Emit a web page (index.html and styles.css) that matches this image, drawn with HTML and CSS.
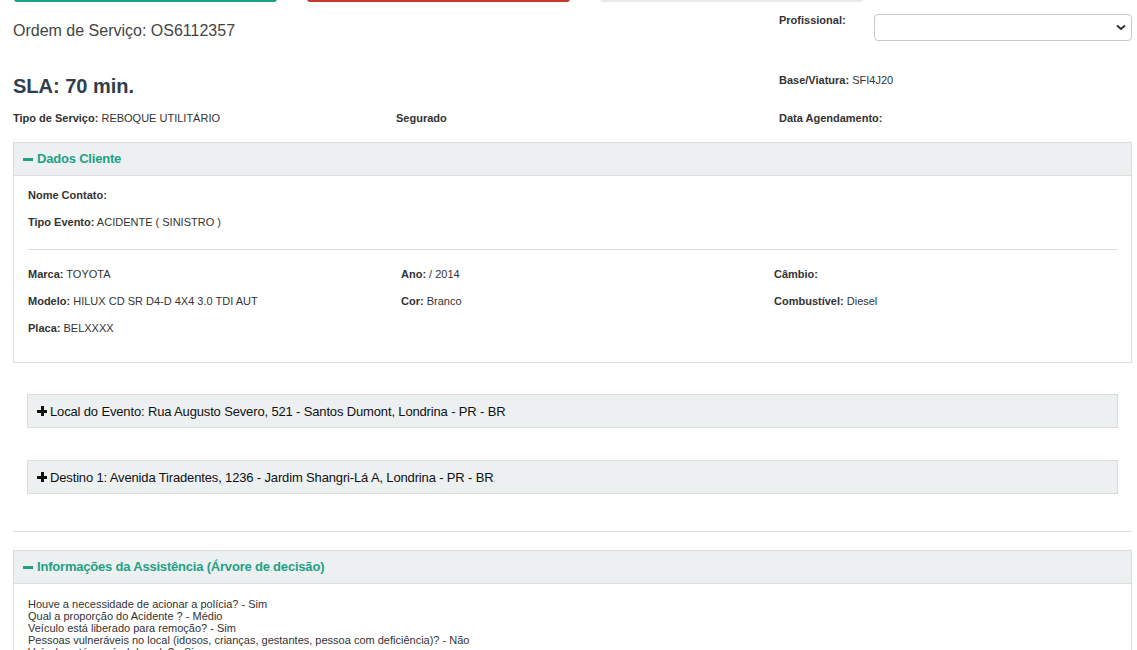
FILE: index.html
```html
<!DOCTYPE html>
<html lang="pt-BR">
<head>
  <meta charset="UTF-8" />
  <meta name="viewport" content="width=device-width, initial-scale=1" />
  <title>Ordem de Serviço OS6112357</title>
  <link rel="stylesheet" href="styles.css">
</head>
<body>
  <div class="page">
    <div class="actions">
      <button class="btn btn-green" aria-label="Aceitar"></button>
      <button class="btn btn-red" aria-label="Recusar"></button>
      <button class="btn btn-light" aria-label="Voltar"></button>
    </div>

    <div class="row row-first">
      <div class="os-title">Ordem de Serviço: OS6112357</div>
      <div></div>
      <div class="prof">
        <label for="profissional">Profissional:</label>
        <div class="select-wrap">
          <select id="profissional"><option></option></select>
          <svg class="chevron" width="10" height="7" viewBox="0 0 10 7"><path d="M1 1.5l4 3.5 4-3.5" fill="none" stroke="#333" stroke-width="2"/></svg>
        </div>
      </div>
    </div>

    <div class="row row-sla">
      <div class="sla">SLA: 70 min.</div>
      <div></div>
      <div class="field"><b>Base/Viatura:</b> SFI4J20</div>
    </div>

    <div class="row row-info">
      <div class="field"><b>Tipo de Serviço:</b> REBOQUE UTILITÁRIO</div>
      <div class="field"><b>Segurado</b></div>
      <div class="field"><b>Data Agendamento:</b></div>
    </div>

    <div class="panel panel-cliente">
      <div class="panel-heading"><span class="ico-minus"></span>Dados Cliente</div>
      <div class="panel-body">
        <div class="field line"><b>Nome Contato:</b></div>
        <div class="field line"><b>Tipo Evento:</b> ACIDENTE ( SINISTRO )</div>
        <hr>
        <div class="row veiculo">
          <div class="field"><b>Marca:</b> TOYOTA</div>
          <div class="field"><b>Ano:</b> / 2014</div>
          <div class="field"><b>Câmbio:</b></div>
          <div class="field"><b>Modelo:</b> HILUX CD SR D4-D 4X4 3.0 TDI AUT</div>
          <div class="field"><b>Cor:</b> Branco</div>
          <div class="field"><b>Combustível:</b> Diesel</div>
          <div class="field"><b>Placa:</b> BELXXXX</div>
        </div>
      </div>
    </div>

    <div class="locais">
      <div class="local"><span class="ico-plus"></span>Local do Evento: Rua Augusto Severo, 521 - Santos Dumont, Londrina - PR - BR</div>
      <div class="local"><span class="ico-plus"></span>Destino 1: Avenida Tiradentes, 1236 - Jardim Shangri-Lá A, Londrina - PR - BR</div>
    </div>

    <hr class="sep">

    <div class="panel">
      <div class="panel-heading"><span class="ico-minus"></span>Informações da Assistência (Árvore de decisão)</div>
      <div class="panel-body arvore">
        <div>Houve a necessidade de acionar a polícia? - Sim</div>
        <div>Qual a proporção do Acidente ? - Médio</div>
        <div>Veículo está liberado para remoção? - Sim</div>
        <div>Pessoas vulneráveis no local (idosos, crianças, gestantes, pessoa com deficiência)? - Não</div>
        <div>Veículo está no nível do solo? - Sim</div>
      </div>
    </div>
  </div>
</body>
</html>
```

FILE: styles.css
```css
body {
  margin: 0;
  font-family: "Liberation Sans", Arial, sans-serif;
  color: #333;
  background: #fff;
  overflow: hidden;
}
.page {
  padding: 0 5px 0 13px;
}
.actions {
  display: flex;
  gap: 30px;
  margin-top: -32px;
  padding-left: 1px;
}
.btn {
  width: 263px;
  height: 34px;
  border: none;
  border-radius: 3px;
}
.btn-green { background: #1aa184; }
.btn-red { background: #c0392b; }
.btn-light { background: #e8e9ea; }

.row {
  display: grid;
  grid-template-columns: repeat(3, 1fr);
  column-gap: 30px;
  align-items: start;
}
.row-first {
  margin-top: 12px;
}
.os-title {
  margin-top: 8px;
  font-size: 16px;
  line-height: 18px;
  color: #444;
}
.prof {
  display: flex;
  align-items: flex-start;
}
.prof label {
  width: 95px;
  font-size: 11px;
  font-weight: bold;
  line-height: 13px;
}
.select-wrap {
  position: relative;
  flex: 1;
}
.select-wrap select {
  width: 100%;
  height: 27px;
  border: 1px solid #c8c8c8;
  border-radius: 4px;
  background: #fff;
  appearance: none;
  -webkit-appearance: none;
}
.chevron {
  position: absolute;
  right: 6px;
  top: 10px;
}
.row-sla {
  margin-top: 33px;
}
.sla {
  font-size: 20px;
  font-weight: bold;
  line-height: 24px;
  color: #2f3e4e;
}
.field {
  font-size: 11px;
  line-height: 13px;
}
.field b { color: #333; }
.row-info {
  margin-top: 14px;
}

.panel {
  border: 1px solid #dcdcdc;
}
.panel-cliente {
  margin-top: 17px;
}
.panel-heading {
  background: #ecf0f1;
  border-bottom: 1px solid #dcdcdc;
  padding: 8px 9px;
  line-height: 16px;
  font-size: 13px;
  font-weight: bold;
  letter-spacing: -0.2px;
  color: #1fa084;
  display: flex;
  align-items: center;
}
.ico-minus {
  display: inline-block;
  width: 10px;
  height: 3px;
  background: #1fa084;
  margin-right: 4px;
}
.panel-body {
  padding: 11px 14px 26px;
}
.panel-body .line {
  line-height: 16px;
  margin-bottom: 11px;
}
.panel-body hr {
  border: none;
  border-top: 1px solid #dcdcdc;
  margin: 19px 0 16px;
}
.veiculo {
  row-gap: 11px;
}
.veiculo .field {
  line-height: 16px;
}

.locais {
  padding: 0 14px;
  margin-top: 31px;
}
.local {
  background: #ecf0f1;
  border: 1px solid #dcdcdc;
  height: 32px;
  padding: 0 9px;
  display: flex;
  align-items: center;
  font-size: 13px;
  letter-spacing: -0.15px;
  color: #111;
  margin-bottom: 32px;
}
.local:last-child {
  margin-bottom: 0;
}
.ico-plus {
  position: relative;
  display: inline-block;
  width: 10px;
  height: 10px;
  margin-right: 3px;
}
.ico-plus::before,
.ico-plus::after {
  content: "";
  position: absolute;
  background: #111;
}
.ico-plus::before { left: 0; top: 4px; width: 10px; height: 3px; }
.ico-plus::after { left: 4px; top: 0; width: 3px; height: 10px; }

.sep {
  border: none;
  border-top: 1px solid #dcdcdc;
  margin: 37px 0 18px;
}
.arvore {
  padding-top: 14px;
  font-size: 11px;
  line-height: 12px;
  color: #333;
}
```
